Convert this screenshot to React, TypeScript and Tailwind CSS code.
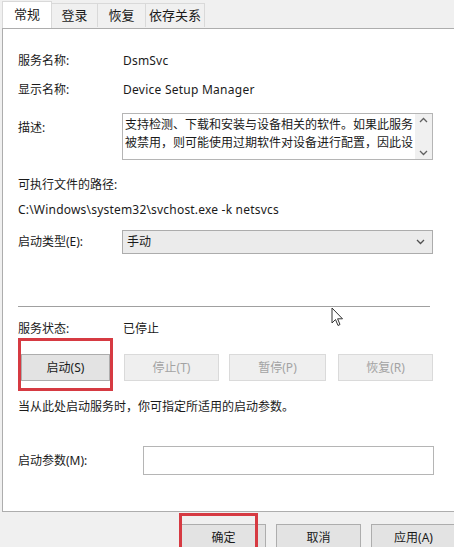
import React from "react";

const font = { fontFamily: '"Noto Sans", "Noto Sans CJK SC", sans-serif' };

function Tab({ label, active, w }: { label: string; active?: boolean; w: string }) {
    if (active) {
        return (
            <div className={`${w} h-[27px] mt-[1px] flex items-center justify-center bg-white border border-b-0 border-[#d9d9d9] relative z-10 -mb-px text-[13px]`}>
                {label}
            </div>
        );
    }
    return (
        <div className={`${w} h-[24px] mt-[3px] flex items-center justify-center bg-[#f0f0f0] border border-b-0 border-l-0 border-[#d9d9d9] text-[13px]`}>
            {label}
        </div>
    );
}

function Btn({ label, disabled, w }: { label: string; disabled?: boolean; w: string }) {
    return (
        <div
            className={`${w} h-[27px] flex items-center justify-center border ${disabled ? "bg-[#efefef] border-[#dadada] text-[#a3a3a3]" : "bg-[#e3e3e3] border-[#adadad] text-[#1a1a1a]"}`}
        >
            {label}
        </div>
    );
}

export default function App() {
    return (
        <div className="w-[454px] h-[547px] bg-[#f0f0f0] overflow-hidden relative text-[12px] text-[#1a1a1a]" style={font}>
            {/* tabs */}
            <div className="flex h-[28px] pl-[2px]">
                <Tab label="常规" active w="w-[50px]" />
                <Tab label="登录" w="w-[46px]" />
                <Tab label="恢复" w="w-[48px]" />
                <Tab label="依存关系" w="w-[59px]" />
            </div>

            {/* page */}
            <div className="ml-[2px] w-[452px] h-[484px] bg-white border border-[#adadad] border-r-0 pl-[15px] pr-[19px] flex flex-col relative">
                <div className="flex items-center h-[20px] mt-[22px]">
                    <div className="w-[105px]">服务名称:</div>
                    <div className="tracking-[0.2px]">DsmSvc</div>
                </div>
                <div className="flex items-center h-[20px] mt-[9px]">
                    <div className="w-[105px]">显示名称:</div>
                    <div className="tracking-[0.25px]">Device Setup Manager</div>
                </div>
                <div className="flex mt-[13px]">
                    <div className="w-[104px] pt-[6px]">描述:</div>
                    <div className="w-[311px] h-[47px] border border-[#b5b5b5] flex">
                        <div className="flex-1 pl-[2px] pt-[2px] leading-[18px] text-[12px] overflow-hidden">
                            支持检测、下载和安装与设备相关的软件。如果此服务被禁用，则可能使用过期软件对设备进行配置，因此设
                        </div>
                        <div className="w-[17px] bg-[#f0f0f0] flex flex-col justify-between items-center py-[3px]">
                            <svg width="9" height="6" viewBox="0 0 9 6"><path d="M1 5 L4.5 1.5 L8 5" fill="none" stroke="#606060" strokeWidth="1.3" /></svg>
                            <svg width="9" height="6" viewBox="0 0 9 6"><path d="M1 1 L4.5 4.5 L8 1" fill="none" stroke="#606060" strokeWidth="1.3" /></svg>
                        </div>
                    </div>
                </div>
                <div className="flex items-center h-[20px] mt-[15px]">可执行文件的路径:</div>
                <div className="flex items-center h-[20px] mt-[5px] tracking-[0.2px]">C:\Windows\system32\svchost.exe -k netsvcs</div>
                <div className="flex items-center mt-[10px]">
                    <div className="w-[104px]">启动类型(E):</div>
                    <div className="w-[311px] h-[24px] border border-[#acacac] bg-[#ebebeb] flex items-center justify-between pl-[4px] pr-[7px]">
                        <span>手动</span>
                        <svg width="9" height="6" viewBox="0 0 9 6"><path d="M1 1 L4.5 4.5 L8 1" fill="none" stroke="#505050" strokeWidth="1.3" /></svg>
                    </div>
                </div>
                <div className="h-px bg-[#a0a0a0] w-[412px] mt-[52px]" />
                <div className="flex items-center h-[20px] mt-[12px]">
                    <div className="w-[105px]">服务状态:</div>
                    <div>已停止</div>
                </div>
                <div className="flex mt-[15px] pl-[3px]">
                    <Btn label="启动(S)" w="w-[89px]" />
                    <div className="ml-[14px]"><Btn label="停止(T)" disabled w="w-[95px]" /></div>
                    <div className="ml-[10px]"><Btn label="暂停(P)" disabled w="w-[97px]" /></div>
                    <div className="ml-[12px]"><Btn label="恢复(R)" disabled w="w-[95px]" /></div>
                </div>
                <div className="flex items-center h-[20px] mt-[16px]">当从此处启动服务时，你可指定所适用的启动参数。</div>
                <div className="flex items-center mt-[29px]">
                    <div className="w-[125px]">启动参数(M):</div>
                    <div className="w-[291px] h-[29px] border border-[#b5b5b5] bg-white" />
                </div>

                {/* highlight around start button */}
                <div className="absolute left-[15px] top-[309px] w-[95px] h-[53px] border-[3px] border-[#d63a42]" />
            </div>

            {/* bottom buttons */}
            <div className="flex justify-end mt-[12px] gap-[10px] -mr-[2px]">
                <Btn label="确定" w="w-[85px]" />
                <Btn label="取消" w="w-[85px]" />
                <Btn label="应用(A)" w="w-[85px]" />
            </div>
            <div className="absolute left-[179px] top-[513px] w-[79px] h-[40px] border-[3px] border-[#d63a42]" />

            {/* mouse pointer */}
            <svg className="absolute left-[331px] top-[307px]" width="14" height="21" viewBox="0 0 14 21">
                <path d="M1 1 L1 16 L4.5 12.5 L7 18.5 L9 17.5 L6.6 11.8 L11.5 11.8 Z" fill="white" stroke="#333" strokeWidth="1" strokeLinejoin="round" />
            </svg>
        </div>
    );
}
